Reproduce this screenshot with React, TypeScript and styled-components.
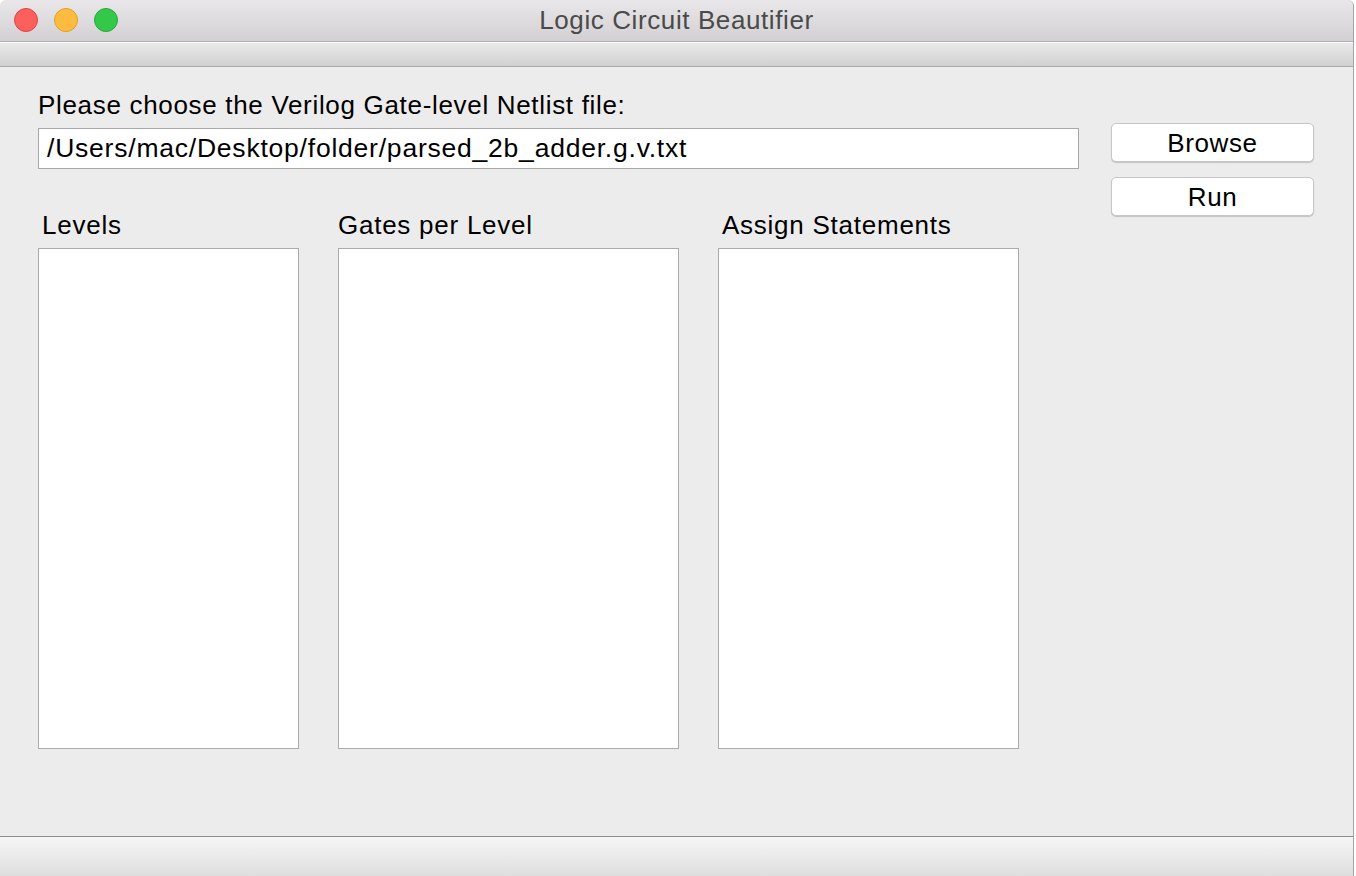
import React from "react";
import styled, { createGlobalStyle } from "styled-components";

const Global = createGlobalStyle`
  html, body { margin: 0; padding: 0; background: #ffffff; }
  body { font-family: "Liberation Sans", Arial, Helvetica, sans-serif; }
  * { box-sizing: border-box; }
`;

const Window = styled.div`
  width: 1354px;
  height: 876px;
  display: flex;
  flex-direction: column;
  background: #ececec;
  border-right: 1px solid #a4a4a4;
  border-top-right-radius: 6px;
  border-top-left-radius: 6px;
  overflow: hidden;
`;

const TitleBar = styled.div`
  position: relative;
  height: 42px;
  flex: none;
  display: flex;
  align-items: center;
  justify-content: center;
  background: linear-gradient(#e9e7e9, #d2d0d2);
  border-bottom: 1px solid #b2b0b2;
`;

const Lights = styled.div`
  position: absolute;
  left: 14px;
  top: 8px;
  display: flex;
  gap: 16px;
`;

const Light = styled.span<{ $c: string; $b: string }>`
  width: 24px;
  height: 24px;
  border-radius: 50%;
  background: ${(p) => p.$c};
  border: 1px solid ${(p) => p.$b};
`;

const Title = styled.div`
  font-size: 26px;
  letter-spacing: 0.6px;
  color: #4a4a4a;
  padding-bottom: 1px;
`;

const ToolBand = styled.div`
  height: 25px;
  flex: none;
  background: linear-gradient(#e9e9e9, #d1d1d1);
  border-top: 1px solid #fbfbfb;
  border-bottom: 1px solid #a9a9a9;
`;

const Content = styled.div`
  flex: 1;
  display: flex;
  gap: 32px;
  padding: 23px 0 0 38px;
`;

const LeftCol = styled.div`
  width: 1041px;
  display: flex;
  flex-direction: column;
`;

const Prompt = styled.div`
  font-size: 26px;
  letter-spacing: 0.68px;
  line-height: 30px;
  color: #000;
`;

const PathField = styled.div`
  margin-top: 8px;
  height: 41px;
  background: #fff;
  border: 1px solid #a8a8a8;
  padding: 0 0 1px 8px;
  display: flex;
  align-items: center;
  font-size: 26.5px;
  letter-spacing: 0.78px;
  color: #000;
`;

const Columns = styled.div`
  margin-top: 41px;
  display: flex;
  gap: 39px;
`;

const ListCol = styled.div<{ $w: number }>`
  width: ${(p) => p.$w}px;
  display: flex;
  flex-direction: column;
`;

const ColLabel = styled.div<{ $indent: number }>`
  font-size: 26px;
  letter-spacing: 0.75px;
  line-height: 30px;
  padding-left: ${(p) => p.$indent}px;
  color: #000;
`;

const ListBox = styled.div`
  margin-top: 8px;
  height: 501px;
  background: #fff;
  border: 1px solid #ababab;
`;

const RightCol = styled.div`
  width: 203px;
  padding-top: 33px;
  display: flex;
  flex-direction: column;
  gap: 15px;
`;

const Button = styled.button`
  height: 39px;
  width: 203px;
  border: 1px solid #c6c6c6;
  border-radius: 5px;
  background: #ffffff;
  box-shadow: 0 1px 1px rgba(0, 0, 0, 0.18);
  font-family: "Liberation Sans", Arial, sans-serif;
  font-size: 26px;
  letter-spacing: 0.6px;
  color: #000;
  padding: 2px 0 0 0;
`;

const BottomBar = styled.div`
  height: 40px;
  flex: none;
  border-top: 1px solid #8e8e8e;
  background: linear-gradient(#f6f6f6, #dedede);
`;

export default function App() {
  return (
    <>
      <Global />
      <Window>
        <TitleBar>
          <Lights>
            <Light $c="#fc605c" $b="#e0443e" />
            <Light $c="#fdbc40" $b="#dea123" />
            <Light $c="#34c84a" $b="#27aa35" />
          </Lights>
          <Title>Logic Circuit Beautifier</Title>
        </TitleBar>
        <ToolBand />
        <Content>
          <LeftCol>
            <Prompt>Please choose the Verilog Gate-level Netlist file:</Prompt>
            <PathField>/Users/mac/Desktop/folder/parsed_2b_adder.g.v.txt</PathField>
            <Columns>
              <ListCol $w={261}>
                <ColLabel $indent={4}>Levels</ColLabel>
                <ListBox />
              </ListCol>
              <ListCol $w={341}>
                <ColLabel $indent={0}>Gates per Level</ColLabel>
                <ListBox />
              </ListCol>
              <ListCol $w={301}>
                <ColLabel $indent={4}>Assign Statements</ColLabel>
                <ListBox />
              </ListCol>
            </Columns>
          </LeftCol>
          <RightCol>
            <Button>Browse</Button>
            <Button>Run</Button>
          </RightCol>
        </Content>
        <BottomBar />
      </Window>
    </>
  );
}
